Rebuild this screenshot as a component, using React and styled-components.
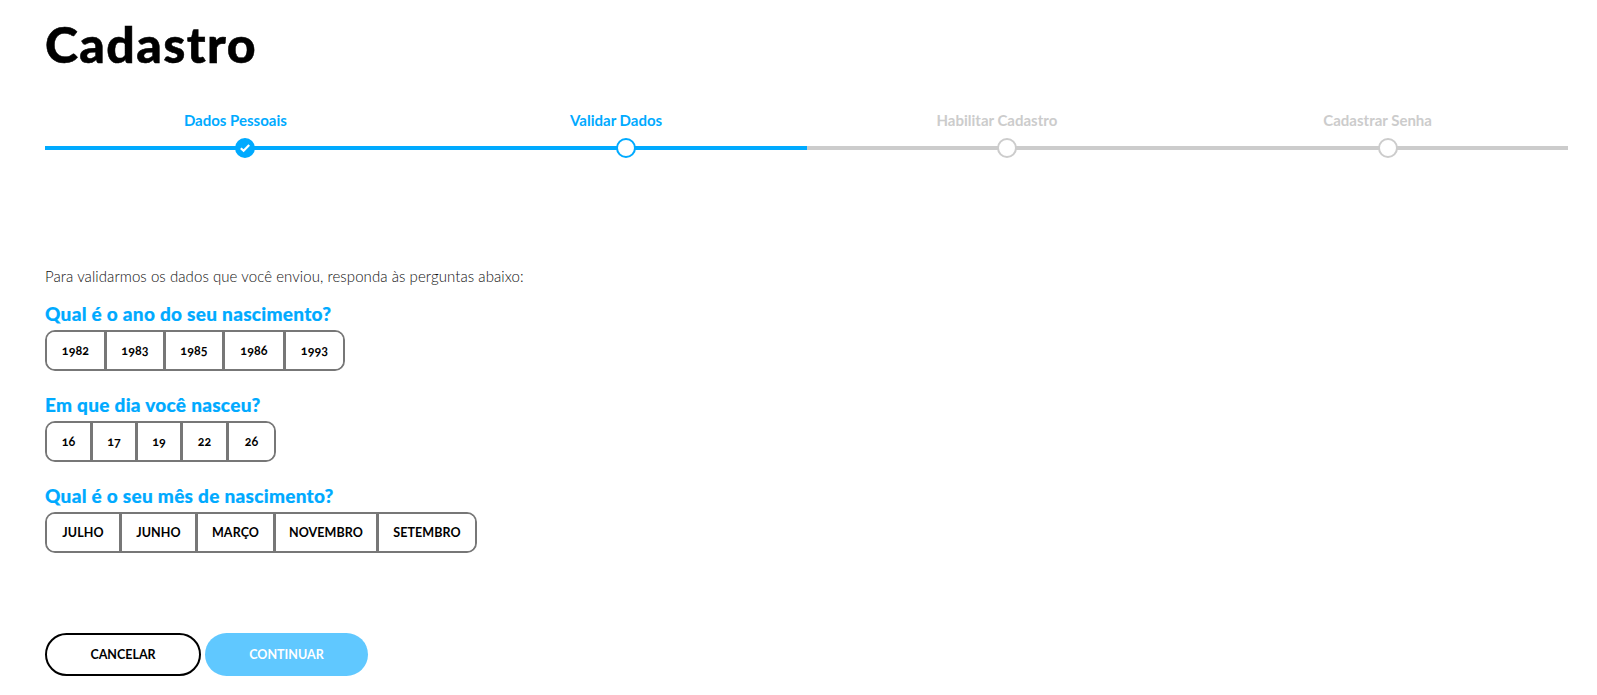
import React from "react";
import styled, {createGlobalStyle} from "styled-components";

const BLUE = "#00aaff";
const GREY = "#cccccc";

const GlobalStyle = createGlobalStyle`
  html, body {
    margin: 0;
    padding: 0;
    background: #fff;
    font-family: Lato, "Open Sans", sans-serif;
  }
`

const Page = styled.main`
  width: 1597px;
  height: 695px;
  box-sizing: border-box;
  padding: 0 29px 0 45px;
  overflow: hidden;
`

const Title = styled.h1`
  margin: 0;
  height: 88px;
  padding-top: 12px;
  box-sizing: border-box;
  font-size: 50px;
  line-height: 64px;
  font-weight: 900;
  letter-spacing: 1.4px;
  -webkit-text-stroke: 0.5px #000;
  color: #000;
`

const Steps = styled.div`
  display: grid;
  grid-template-columns: repeat(4, 1fr);
  margin-top: 23px;
`

const Step = styled.div`
  position: relative;
  height: 50px;
  text-align: center;
  font-size: 15px;
  line-height: 18px;
  font-weight: 700;
  color: ${({$active}) => $active ? BLUE : GREY};

  &:after {
    content: '';
    position: absolute;
    left: 0;
    right: 0;
    top: 35px;
    height: 4px;
    background: ${({$active}) => $active ? BLUE : GREY};
  }
`

const Dot = styled.span`
  position: absolute;
  z-index: 1;
  left: 50%;
  top: 27px;
  width: 20px;
  height: 20px;
  box-sizing: border-box;
  border-radius: 50%;
  border: 2px solid ${({$active}) => $active ? BLUE : GREY};
  background: ${({$done}) => $done ? BLUE : "#fff"};
  display: flex;
  align-items: center;
  justify-content: center;
`

const Intro = styled.p`
  margin: 105px 0 0;
  font-size: 15px;
  line-height: 20px;
  font-weight: 300;
  letter-spacing: 0.07px;
  color: #111;
`

const Question = styled.section`
  margin-top: ${({$first}) => $first ? "17px" : "23px"};
`

const QuestionTitle = styled.h2`
  margin: 0 0 5px;
  font-size: 19px;
  line-height: 22px;
  font-weight: 900;
  letter-spacing: 0.28px;
  -webkit-text-stroke: 0.2px ${BLUE};
  color: ${BLUE};
`

const Options = styled.div`
  display: inline-flex;
  height: 41px;
  box-sizing: border-box;
  border: 2px solid #777;
  border-radius: 10px;
  overflow: hidden;
`

const Option = styled.button`
  width: ${({$width}) => $width}px;
  box-sizing: border-box;
  padding: 0;
  border: 0;
  border-right: 3px solid #777;
  background: #fff;
  font-family: inherit;
  font-size: 12.5px;
  letter-spacing: 0.1px;
  font-weight: 700;
  font-feature-settings: "onum";
  color: #000;

  &:last-child {
    border-right: 0;
  }
`

const Actions = styled.div`
  display: flex;
  gap: 4px;
  margin-top: 80px;
`

const ActionButton = styled.button`
  width: ${({$primary}) => $primary ? 163 : 156}px;
  height: 43px;
  box-sizing: border-box;
  border-radius: 22px;
  border: ${({$primary}) => $primary ? "0" : "2px solid #000"};
  background: ${({$primary}) => $primary ? "#60c8ff" : "#fff"};
  color: ${({$primary}) => $primary ? "#fff" : "#000"};
  font-family: inherit;
  font-size: 12.5px;
  font-weight: 700;
`

const stepList = [
    {label: "Dados Pessoais", active: true, done: true},
    {label: "Validar Dados", active: true},
    {label: "Habilitar Cadastro"},
    {label: "Cadastrar Senha"},
]

const questions = [
    {
        title: "Qual é o ano do seu nascimento?",
        options: [["1982", 60], ["1983", 59], ["1985", 59], ["1986", 61], ["1993", 57]],
    },
    {
        title: "Em que dia você nasceu?",
        options: [["16", 46], ["17", 45], ["19", 45], ["22", 46], ["26", 45]],
    },
    {
        title: "Qual é o seu mês de nascimento?",
        options: [["JULHO", 75], ["JUNHO", 76], ["MARÇO", 78], ["NOVEMBRO", 103], ["SETEMBRO", 96]],
    },
]

const Check = () => (
    <svg width="12" height="10" viewBox="0 0 12 10" fill="none">
        <path d="M1.8 5.2 4.6 7.8 10.2 2" stroke="#fff" strokeWidth="2.2"/>
    </svg>
)

const App = () => (
    <Page>
        <GlobalStyle/>
        <Title>Cadastro</Title>
        <Steps>
            {stepList.map(step => (
                <Step key={step.label} $active={step.active}>
                    {step.label}
                    <Dot $active={step.active} $done={step.done}>{step.done && <Check/>}</Dot>
                </Step>
            ))}
        </Steps>
        <Intro>Para validarmos os dados que você enviou, responda às perguntas abaixo:</Intro>
        {questions.map((question, index) => (
            <Question key={question.title} $first={index === 0}>
                <QuestionTitle>{question.title}</QuestionTitle>
                <Options>
                    {question.options.map(([label, width]) => (
                        <Option key={label} $width={width}>{label}</Option>
                    ))}
                </Options>
            </Question>
        ))}
        <Actions>
            <ActionButton>CANCELAR</ActionButton>
            <ActionButton $primary>CONTINUAR</ActionButton>
        </Actions>
    </Page>
)

export default App
